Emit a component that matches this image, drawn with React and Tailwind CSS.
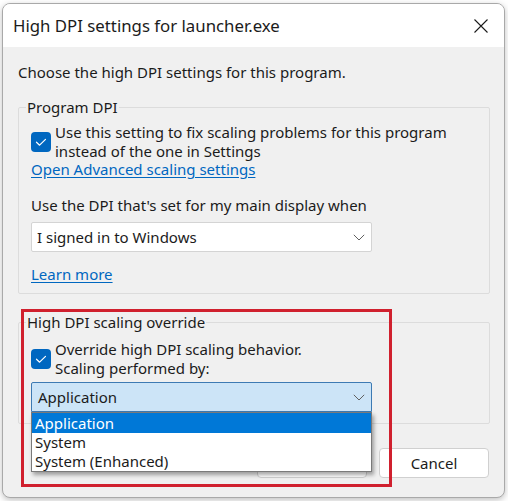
import React from "react";

function Check() {
  return (
    <div className="w-[20px] h-[20px] shrink-0 rounded-[4px] bg-[#0067c0] flex items-center justify-center">
      <svg width="20" height="20" viewBox="0 0 20 20" fill="none">
        <path d="M5.5 10.2 L8.6 13.2 L14.5 7.3" stroke="white" strokeWidth="1.2" strokeLinecap="round" strokeLinejoin="round" />
      </svg>
    </div>
  );
}

function Chevron() {
  return (
    <svg width="12" height="7" viewBox="0 0 12 7" fill="none">
      <path d="M0.8 0.8 L6 6 L11.2 0.8" stroke="#606060" strokeWidth="1" />
    </svg>
  );
}

export default function App() {
  return (
    <div className="relative w-[508px] h-[501px] bg-white overflow-hidden font-['Noto_Sans',sans-serif] text-[15px] text-[#1b1b1b]">
      <div className="ml-[2px] mt-[3px] w-[503px] h-[495px] rounded-[8px] border border-[#a9a9a9] bg-[#f0f0f0] overflow-hidden shadow-[0_2px_6px_rgba(0,0,0,0.25)] flex flex-col">
        <div className="h-[43px] shrink-0 bg-white flex items-center justify-between pl-[10px] pr-[16px]">
          <span className="text-[16.8px] leading-[22px]">High DPI settings for launcher.exe</span>
          <svg width="14" height="14" viewBox="0 0 14 14" fill="none">
            <path d="M0.5 0.5 L13.5 13.5 M13.5 0.5 L0.5 13.5" stroke="#1b1b1b" strokeWidth="1.1" />
          </svg>
        </div>
        <div className="pl-[15px] pr-[14px] pt-[15px]">
          <div className="leading-[20px]">Choose the high DPI settings for this program.</div>

          <fieldset className="mt-[15px] border border-[#dcdcdc] rounded-[2px] pl-[12px] pb-[9px]">
            <legend className="-ml-[5px] px-[1px] leading-[20px]">Program DPI</legend>
            <div className="mt-[6px] flex items-center gap-[4px]">
              <Check />
              <div className="leading-[19px]">
                <div>Use this setting to fix scaling problems for this program</div>
                <div>instead of the one in Settings</div>
              </div>
            </div>
            <div className="-mt-[1px] leading-[19px] text-[#0067c0] underline underline-offset-2">Open Advanced scaling settings</div>
            <div className="mt-[17px] leading-[19px]">Use the DPI that's set for my main display when</div>
            <div className="mt-[7px] w-[341px] h-[30px] bg-white border border-[#d4d4d4] rounded-[2px] flex items-center justify-between pl-[5px] pr-[6px]">
              <span>I signed in to Windows</span>
              <Chevron />
            </div>
            <div className="mt-[13px] leading-[19px] text-[#0067c0] underline underline-offset-2">Learn more</div>
          </fieldset>

          <fieldset className="mt-[18px] border border-[#dcdcdc] rounded-[2px] pl-[12px] pb-[11px]">
            <legend className="-ml-[5px] px-[1px] leading-[20px]">High DPI scaling override</legend>
            <div className="mt-[8px] flex items-center gap-[4px]">
              <Check />
              <div className="leading-[18.5px]">
                <div>Override high DPI scaling behavior.</div>
                <div>Scaling performed by:</div>
              </div>
            </div>
            <div className="relative mt-[5px] w-[341px]">
              <div className="h-[30px] bg-[#cce4f7] border border-[#3d7ab3] rounded-t-[2px] flex items-center justify-between pl-[6px] pr-[6px]">
                <span>Application</span>
                <Chevron />
              </div>
              <div className="absolute left-0 top-full w-[341px] z-10 bg-white border border-[#7a7a7a] shadow-[2px_3px_4px_rgba(0,0,0,0.35)] leading-[19px]">
                <div className="bg-[#0078d7] text-white pl-[3px] h-[20px] leading-[20px]">Application</div>
                <div className="pl-[3px]">System</div>
                <div className="pl-[3px]">System (Enhanced)</div>
              </div>
            </div>
          </fieldset>

          <div className="mt-[24px] flex justify-end gap-[12px] pr-[1px]">
            <button className="w-[110px] h-[30px] bg-white border border-[#d0d0d0] rounded-[4px]">OK</button>
            <button className="w-[110px] h-[30px] bg-white border border-[#d0d0d0] rounded-[4px]">Cancel</button>
          </div>
        </div>
      </div>
      <div className="absolute left-[21px] top-[309px] w-[371px] h-[178px] border-[3px] border-[#d0202e] z-20 pointer-events-none" />
    </div>
  );
}
